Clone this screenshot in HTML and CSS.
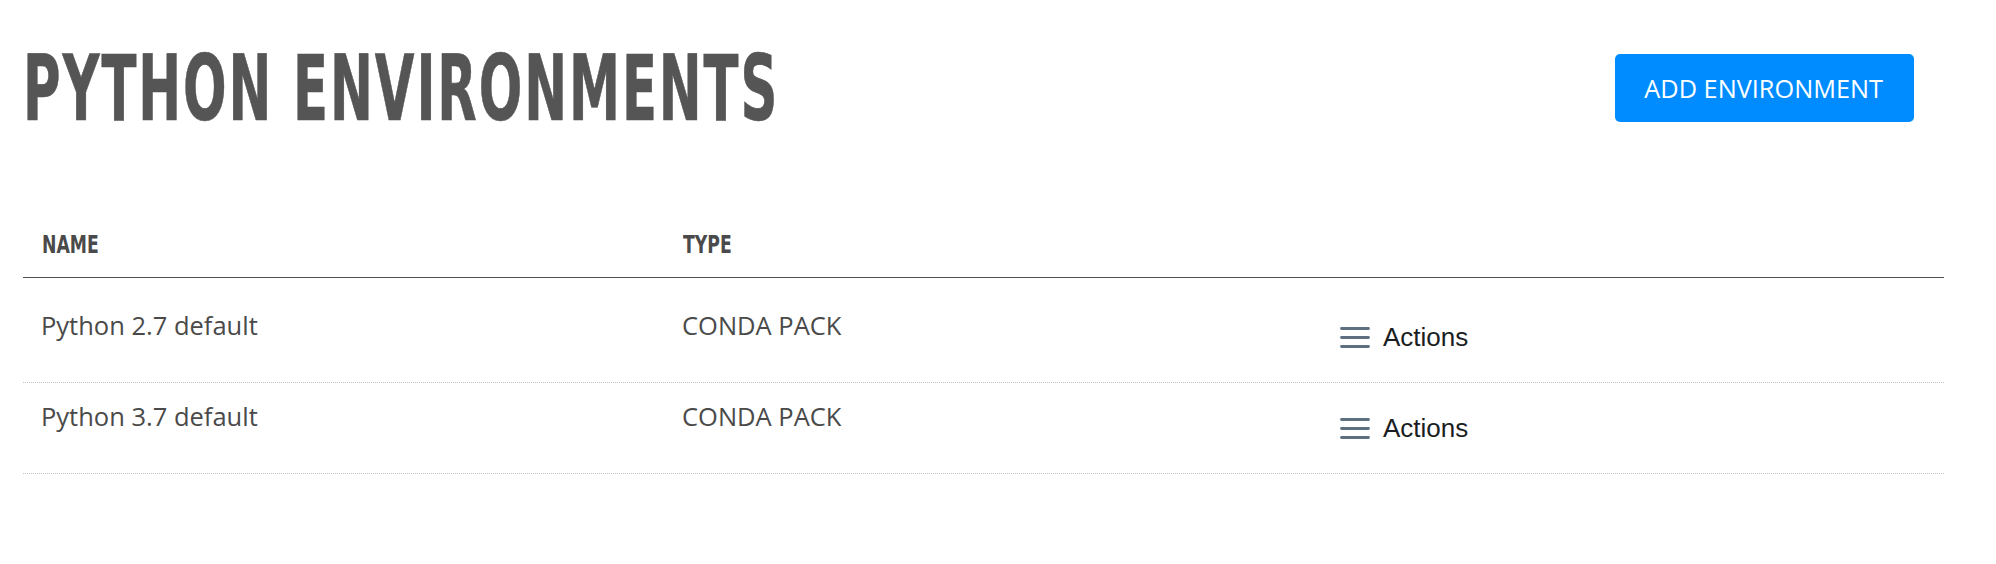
FILE: index.html
```html
<!DOCTYPE html>
<html lang="en">
<head>
<meta charset="utf-8">
<title>Python Environments</title>
<link rel="stylesheet" href="styles.css">
</head>
<body>
<div class="page">
  <header class="page-header">
    <h1 class="page-title">PYTHON ENVIRONMENTS</h1>
    <button class="btn-primary" type="button">ADD ENVIRONMENT</button>
  </header>

  <div class="env-table">
    <div class="env-head">
      <div class="th"><span class="th-label">NAME</span></div>
      <div class="th"><span class="th-label">TYPE</span></div>
      <div class="th"></div>
    </div>
    <div class="env-body">
      <div class="env-row">
        <div class="td">Python 2.7 default</div>
        <div class="td">CONDA PACK</div>
        <div class="td td-actions">
          <svg class="menu-icon" width="30" height="22" viewBox="0 0 30 22" aria-hidden="true">
            <path d="M1.5 2.5H28.5M1.5 11.5H28.5M1.5 20.5H28.5" stroke="#5e6f7f" stroke-width="2.8" stroke-linecap="round" fill="none"/>
          </svg>
          <span class="actions-label">Actions</span>
        </div>
      </div>
      <div class="env-row">
        <div class="td">Python 3.7 default</div>
        <div class="td">CONDA PACK</div>
        <div class="td td-actions">
          <svg class="menu-icon" width="30" height="22" viewBox="0 0 30 22" aria-hidden="true">
            <path d="M1.5 2.5H28.5M1.5 11.5H28.5M1.5 20.5H28.5" stroke="#5e6f7f" stroke-width="2.8" stroke-linecap="round" fill="none"/>
          </svg>
          <span class="actions-label">Actions</span>
        </div>
      </div>
    </div>
  </div>
</div>
</body>
</html>
```

FILE: styles.css
```css
html, body {
  margin: 0;
  padding: 0;
  background: #ffffff;
}

body {
  font-family: "Open Sans", "Liberation Sans", sans-serif;
  color: #4a4a4a;
}

.page {
  padding: 54px 0 0 23px;
}

.page-header {
  display: flex;
  align-items: center;
  justify-content: space-between;
  padding-right: 82px;
  height: 68px;
}

.page-title {
  margin: 2px 0 0 0;
  font-family: "DejaVu Sans Condensed", "Liberation Sans", sans-serif;
  font-weight: 700;
  font-size: 90px;
  line-height: 68px;
  color: #555555;
  transform: scaleX(0.633);
  transform-origin: left center;
  white-space: nowrap;
  letter-spacing: 3px;
  -webkit-text-stroke: 0.6px #555555;
}

.btn-primary {
  height: 68px;
  padding: 0 31px 0 29px;
  border: 0;
  border-radius: 5px;
  background: #008cff;
  color: #ffffff;
  font-family: "Open Sans", "Liberation Sans", sans-serif;
  font-size: 25.3px;
  font-weight: 400;
  line-height: 68px;
  cursor: pointer;
}

.env-table {
  margin: 91px 52px 0 0;
}

.env-head,
.env-row {
  display: grid;
  grid-template-columns: 641px 512px 1fr;
  align-items: start;
}

.env-head {
  border-bottom: 1px solid #505050;
}

.th {
  padding: 20px 18px 20px 19px;
  height: 24px;
}

.th-label {
  display: inline-block;
  font-family: "DejaVu Sans Condensed", "Liberation Sans", sans-serif;
  font-weight: 700;
  font-size: 24px;
  line-height: 24px;
  color: #4a4a4a;
  transform: scaleX(0.8);
  transform-origin: left center;
}

.env-body {
  padding-top: 14px;
}

.env-row {
  border-bottom: 1px dotted #c4c4c4;
}

.td {
  padding: 15px 18px 39px 18px;
  font-size: 25.5px;
  line-height: 36px;
  color: #4a4a4a;
}

.td-actions {
  display: flex;
  align-items: center;
  padding: 27px 0 0 164px;
}

.menu-icon {
  display: block;
  flex: none;
}

.actions-label {
  margin-left: 13px;
  font-family: "Liberation Sans", Arial, sans-serif;
  font-size: 26px;
  line-height: 36px;
  color: #1a1e22;
}
```
